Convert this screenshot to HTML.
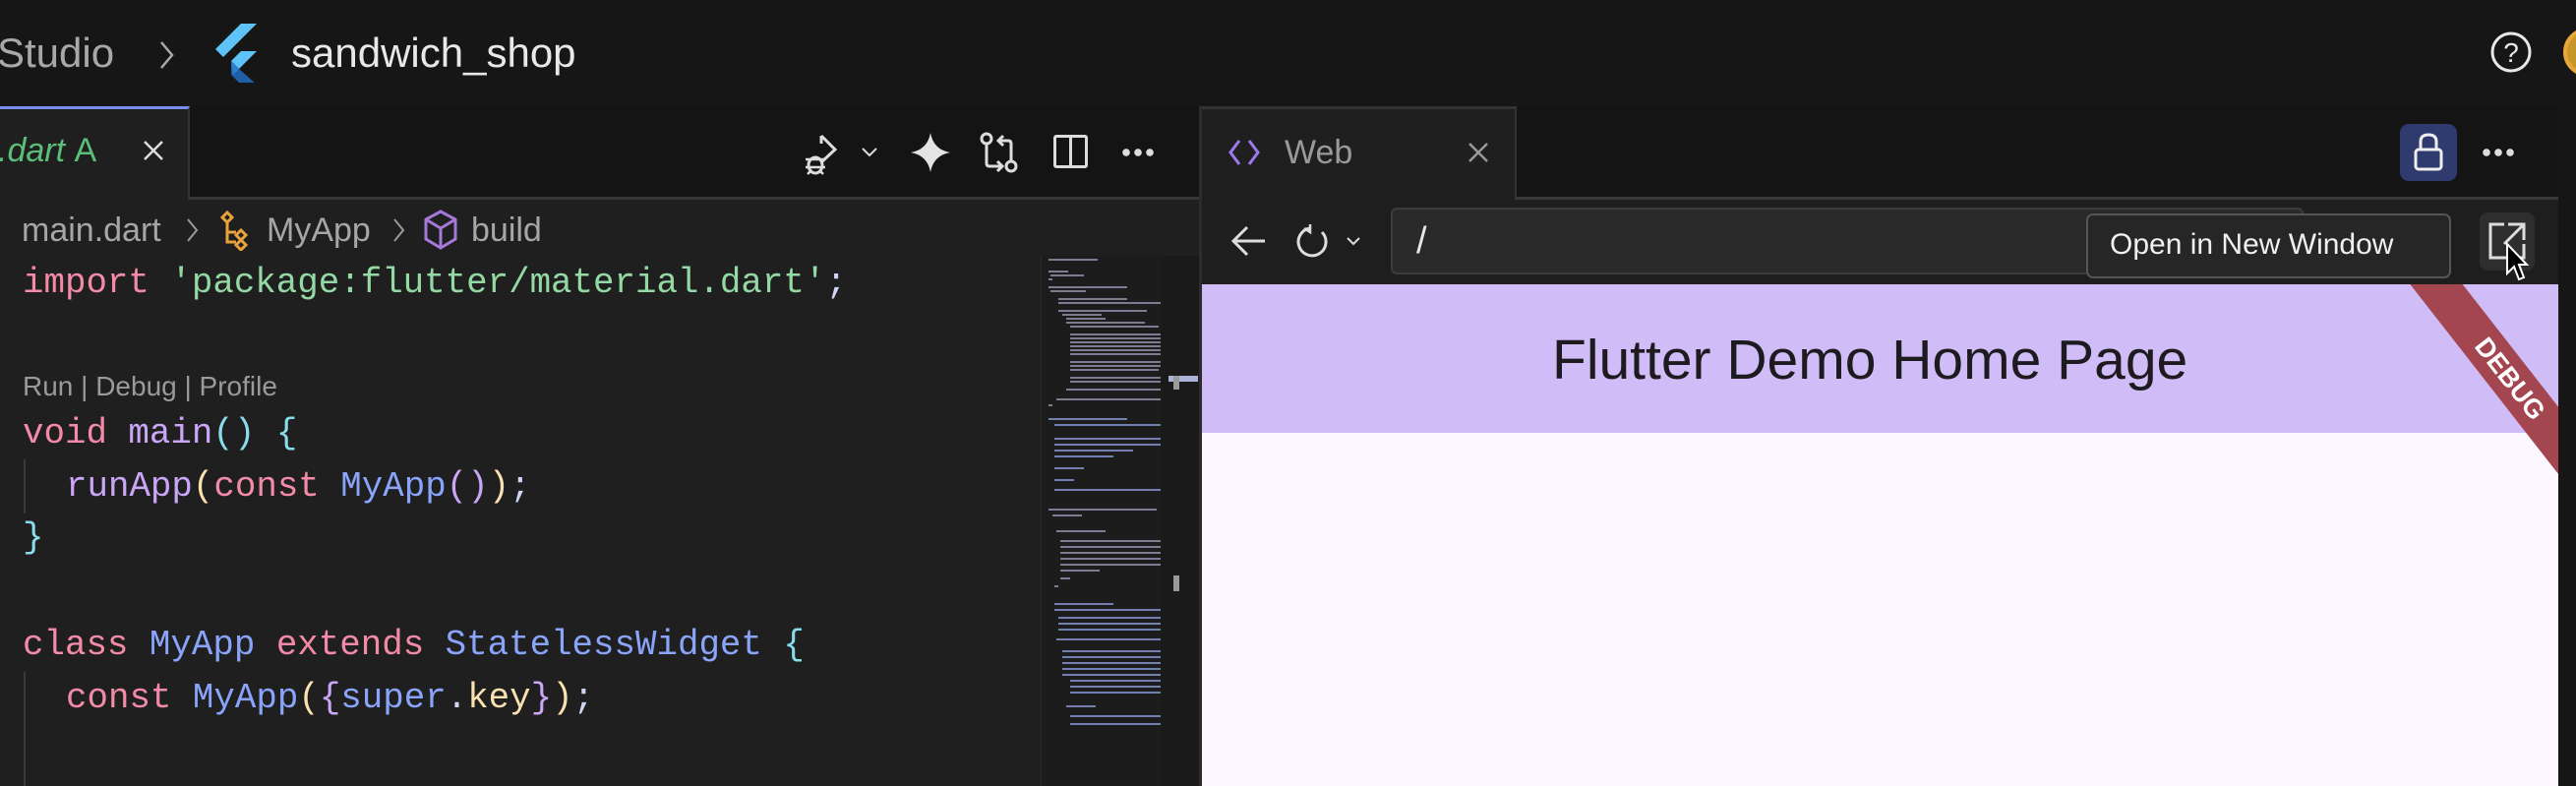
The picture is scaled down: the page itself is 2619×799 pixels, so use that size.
<!DOCTYPE html>
<html><head><meta charset="utf-8"><style>
*{margin:0;padding:0;box-sizing:border-box}
body{width:2619px;height:799px;overflow:hidden;background:#161616;position:relative;font-family:"Liberation Sans",sans-serif}
.a{position:absolute}
.code{font-family:"Liberation Mono",monospace;font-size:35.8px;white-space:pre;line-height:1}
.k{color:#f38ba8}.s{color:#94d9a4}.f{color:#cba6f7}.t{color:#89a4fa}.p{color:#89dceb}.y{color:#f9e2af}.w{color:#cdd6f4}
.dots{position:absolute;width:36px;height:8px;background:radial-gradient(circle,#ddd 3.5px,transparent 4px) 0 0/12px 8px repeat-x}
</style></head><body>
<div class="a" style="left:0;top:0;width:2619px;height:108px;background:#161616"></div>
<div class="a" style="left:-3px;top:30px;font-size:42px;color:#a8a8a8">Studio</div>
<svg class="a" style="left:160px;top:40px" width="20" height="32"><path d="M4 3 L15 16 L4 29" fill="none" stroke="#aaa" stroke-width="2.5"/></svg>
<svg class="a" style="left:215px;top:24px" width="50" height="60" viewBox="0 0 50 60">
<path d="M30 0 L46 0 L12 34 L4 26 Z" fill="#5ec3f7"/>
<path d="M30 28 L46 28 L28 46 L20 38 Z" fill="#5ec3f7"/>
<path d="M20 38 L28 46 L46 62 L30 62 L20 52 Z" fill="#1f5fa8"/>
<path d="M20 38 L28 46 L22 52 Z" fill="#2d7fd0"/>
</svg>
<div class="a" style="left:296px;top:30px;font-size:42px;color:#e8e8e8">sandwich_shop</div>
<svg class="a" style="left:2530px;top:30px" width="46" height="46"><circle cx="23" cy="23" r="19" fill="none" stroke="#e8e8e8" stroke-width="3"/><text x="23" y="33" text-anchor="middle" font-size="28" fill="#e8e8e8" font-family="Liberation Sans">?</text></svg>
<div class="a" style="left:2606px;top:28px;width:50px;height:50px;border-radius:50%;border:4px solid #e8a838;background:#c9962c"></div>

<div class="a" style="left:0;top:108px;width:1219px;height:92px;background:#141414"></div>
<div class="a" style="left:0;top:108px;width:193px;height:95px;background:#1f1f1f;border-top:3px solid #7b8cf0;border-right:2px solid #333"></div>
<div class="a" style="left:-2px;top:134px;font-size:34px;color:#5bbf7a;font-style:italic">.dart <span style="font-style:normal">A</span></div>
<svg class="a" style="left:143px;top:140px" width="26" height="26"><path d="M4 4L22 22M22 4L4 22" stroke="#ddd" stroke-width="2.5"/></svg>
<div class="a" style="left:193px;top:200px;width:1026px;height:3px;background:#383838"></div>
<svg class="a" style="left:815px;top:132px" width="90" height="50" viewBox="0 0 90 50">
<path d="M20 6 L34 20 L20 33" fill="none" stroke="#ddd" stroke-width="3"/><path d="M20 6 L20 14" stroke="#ddd" stroke-width="3"/>
<ellipse cx="14" cy="36" rx="7" ry="8" fill="none" stroke="#ddd" stroke-width="3"/><path d="M4 30h20M4 38h20M6 45l3-3M22 45l-3-3" stroke="#ddd" stroke-width="2.5"/>
<path d="M62 19 L69 26 L76 19" fill="none" stroke="#ddd" stroke-width="2"/></svg>
<svg class="a" style="left:926px;top:135px" width="40" height="40"><path d="M20 0 Q23 17 40 20 Q23 23 20 40 Q17 23 0 20 Q17 17 20 0Z" fill="#e4e4e4"/></svg>
<svg class="a" style="left:996px;top:134px" width="42" height="44"><circle cx="7" cy="7" r="5" fill="none" stroke="#ddd" stroke-width="3"/><circle cx="32" cy="35" r="5" fill="none" stroke="#ddd" stroke-width="3"/><path d="M7 12V32Q7 35 10 35H22M18 30l5 5-5 5" fill="none" stroke="#ddd" stroke-width="3"/><path d="M32 30V12Q32 9 29 9H20M24 4l-5 5 5 5" fill="none" stroke="#ddd" stroke-width="3"/></svg>
<div class="a" style="left:1071px;top:137px;width:35px;height:34px;border:3px solid #ddd;border-radius:3px"></div>
<div class="a" style="left:1087px;top:137px;width:3px;height:34px;background:#ddd"></div>
<div class="dots" style="left:1139px;top:151px"></div>

<div class="a" style="left:0;top:203px;width:1219px;height:596px;background:#1f1f1f"></div>
<div class="a" style="left:22px;top:215px;font-size:34px;color:#a6a6a6">main.dart</div>
<svg class="a" style="left:188px;top:220px" width="16" height="28"><path d="M3 3L12 14L3 25" fill="none" stroke="#999" stroke-width="2"/></svg>
<svg class="a" style="left:222px;top:213px" width="36" height="42"><path d="M4 8l5-5 5 5-5 5zM18 26l5-5 5 5-5 5zM18 36l5-5 5 5-5 5zM9 13v10h9M9 23v10h9" fill="none" stroke="#e8a33d" stroke-width="3"/></svg>
<div class="a" style="left:271px;top:215px;font-size:34px;color:#a6a6a6">MyApp</div>
<svg class="a" style="left:398px;top:220px" width="16" height="28"><path d="M3 3L12 14L3 25" fill="none" stroke="#999" stroke-width="2"/></svg>
<svg class="a" style="left:430px;top:213px" width="36" height="42"><path d="M18 2L33 10V30L18 39L3 30V10Z M3 10L18 19L33 10 M18 19V39" fill="none" stroke="#a679d8" stroke-width="3"/></svg>
<div class="a" style="left:479px;top:215px;font-size:34px;color:#a6a6a6">build</div>

<div class="a code" style="left:23px;top:270px"><span class="k">import</span> <span class="s">'package:flutter/material.dart'</span><span class="w">;</span></div>
<div class="a" style="left:23px;top:377px;font-size:28px;color:#9a9a9a">Run | Debug | Profile</div>
<div class="a code" style="left:23px;top:423px"><span class="k">void</span> <span class="f">main</span><span class="p">()</span> <span class="p">{</span></div>
<div class="a code" style="left:67px;top:477px"><span class="f">runApp</span><span class="y">(</span><span class="k">const</span> <span class="t">MyApp</span><span class="f">()</span><span class="y">)</span><span class="w">;</span></div>
<div class="a code" style="left:23px;top:529px"><span class="p">}</span></div>
<div class="a code" style="left:23px;top:638px"><span class="k">class</span> <span class="t">MyApp</span> <span class="k">extends</span> <span class="t">StatelessWidget</span> <span class="p">{</span></div>
<div class="a code" style="left:67px;top:692px"><span class="k">const</span> <span class="t">MyApp</span><span class="y">(</span><span class="f">{</span><span class="t">super</span><span class="w">.</span><span class="y">key</span><span class="f">}</span><span class="y">)</span><span class="w">;</span></div>
<div class="a" style="left:24px;top:467px;width:2px;height:55px;background:#3a3a3a"></div>
<div class="a" style="left:24px;top:683px;width:2px;height:116px;background:#3a3a3a"></div>

<div class="a" style="left:1058px;top:260px;width:123px;height:539px;background:#1c1c1c;border-left:1px solid #2a2a2a"></div>
<svg class="a" style="left:1064px;top:262px" width="116" height="490">
<g stroke-width="2" opacity=".75">
<path stroke="#a09ab8" d="M2 2h50M2 14h20M4 18h34M2 22h4M2 30h80M4 34h36M12 42h70M12 46h120M12 54h90M16 58h40M20 62h40M20 66h80M24 70h90M24 78h120M24 82h120M24 86h120M24 90h120M24 94h120M24 98h100M24 106h120M24 110h110M24 114h90M24 122h120M24 126h100M20 134h120M10 144h120M2 150h4"/>
<path stroke="#8fa0e0" d="M2 164h80M8 170h120M8 184h120M8 190h120M8 196h80M8 202h60M8 214h30M8 226h20M8 236h120"/>
<path stroke="#a09ab8" d="M2 256h110M6 262h30M10 278h50M14 288h120M14 294h120M14 300h120M14 306h120M14 312h120M14 318h40M14 326h10M8 334h4"/>
<path stroke="#8fa0e0" d="M8 352h60M8 358h120M12 366h120M12 372h120M12 378h120M10 388h120M16 400h120M16 406h120M16 412h120M16 418h120M16 424h110M24 430h120M24 436h120M24 442h120M20 456h30M24 466h100M24 474h100"/>
</g></svg>
<div class="a" style="left:1181px;top:260px;width:38px;height:539px;background:#1a1a1a"></div>
<div class="a" style="left:1188px;top:382px;width:30px;height:6px;background:#a9b2d8"></div>
<div class="a" style="left:1193px;top:382px;width:6px;height:14px;background:#9a9a9a"></div>
<div class="a" style="left:1193px;top:585px;width:6px;height:16px;background:#9a9a9a"></div>

<div class="a" style="left:1219px;top:108px;width:3px;height:691px;background:#2c2c2c"></div>
<div class="a" style="left:1222px;top:108px;width:1379px;height:94px;background:#141414"></div>
<div class="a" style="left:1222px;top:108px;width:320px;height:95px;background:#1f1f1f;border-top:3px solid #333;border-right:2px solid #333"></div>
<svg class="a" style="left:1248px;top:140px" width="34" height="30"><path d="M12 3L3 15L12 27M22 3L31 15L22 27" fill="none" stroke="#9b7af0" stroke-width="3"/></svg>
<div class="a" style="left:1306px;top:136px;font-size:34px;color:#9a9a9a">Web</div>
<svg class="a" style="left:1490px;top:142px" width="26" height="26"><path d="M4 4L22 22M22 4L4 22" stroke="#999" stroke-width="2.5"/></svg>
<div class="a" style="left:1542px;top:200px;width:1059px;height:3px;background:#383838"></div>
<div class="a" style="left:2440px;top:126px;width:58px;height:58px;border-radius:9px;background:#2f3a6e"></div>
<svg class="a" style="left:2451px;top:134px" width="36" height="42"><path d="M10 18V10Q10 3 18 3Q26 3 26 10V18" fill="none" stroke="#eee" stroke-width="3"/><rect x="5" y="18" width="26" height="20" rx="3" fill="none" stroke="#eee" stroke-width="3"/></svg>
<div class="dots" style="left:2522px;top:151px"></div>
<div class="a" style="left:2601px;top:108px;width:18px;height:691px;background:#161616"></div>

<div class="a" style="left:1222px;top:203px;width:1379px;height:86px;background:#1e1e1e"></div>
<svg class="a" style="left:1250px;top:226px" width="40" height="38"><path d="M36 19H6M18 5L4 19L18 33" fill="none" stroke="#ddd" stroke-width="3"/></svg>
<svg class="a" style="left:1318px;top:226px" width="72" height="40"><path d="M14 6A14 14 0 1 0 26 10" fill="none" stroke="#ddd" stroke-width="3"/><path d="M14 2L14 10L8 6" fill="none" stroke="#ddd" stroke-width="2.5"/><path d="M52 16L58 22L64 16" fill="none" stroke="#ddd" stroke-width="2"/></svg>
<div class="a" style="left:1414px;top:211px;width:928px;height:68px;background:#2a2a2a;border:2px solid #3c3c3c;border-radius:6px"></div>
<div class="a" style="left:1440px;top:224px;font-size:38px;color:#e8e8e8">/</div>
<div class="a" style="left:2521px;top:216px;width:56px;height:59px;background:#2e2e2e;border-radius:8px"></div>
<svg class="a" style="left:2528px;top:224px" width="44" height="44"><path d="M18 4H4V38H38V24" fill="none" stroke="#ddd" stroke-width="3"/><path d="M22 4H38V20M38 4L18 24" fill="none" stroke="#ddd" stroke-width="3"/></svg>
<svg class="a" style="left:2547px;top:246px" width="24" height="42"><path d="M2 2L2 32L9 25L14 38L19 36L14 23L22 23Z" fill="#000" stroke="#fff" stroke-width="2"/></svg>
<div class="a" style="left:2121px;top:217px;width:371px;height:66px;background:#262626;border:2px solid #555;border-radius:7px;color:#f0f0f0;font-size:30px;padding:13px 0 0 22px">Open in New Window</div>

<div class="a" style="left:1222px;top:289px;width:1379px;height:510px;background:#fdf7ff;overflow:hidden">
<div class="a" style="left:0;top:0;width:1379px;height:151px;background:#d0bcf6"></div>
<div class="a" style="left:356px;top:44px;font-size:57px;color:#1d1b20">Flutter Demo Home Page</div>
<div class="a" style="left:1190px;top:75px;width:280px;height:42px;background:#a3464f;transform:rotate(52deg);color:#fff;font-weight:bold;font-size:27px;text-align:center;line-height:42px;transform-origin:center">DEBUG</div>
</div>
</body></html>
